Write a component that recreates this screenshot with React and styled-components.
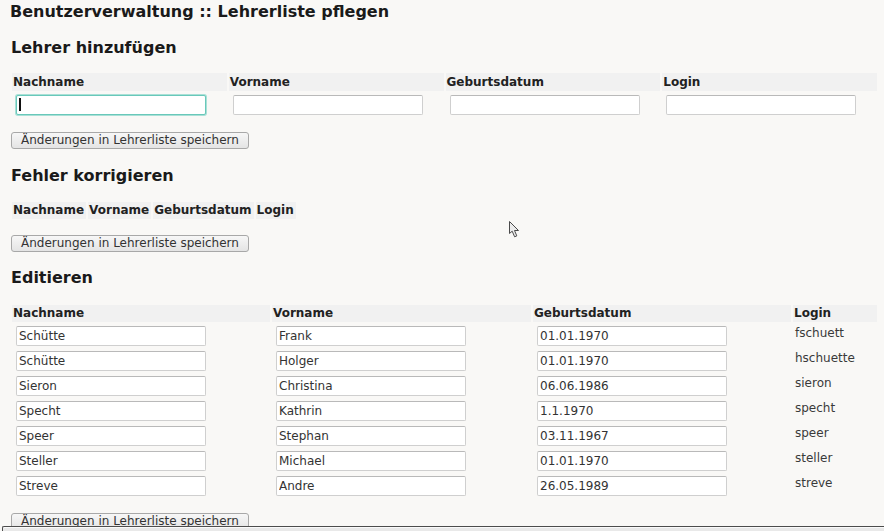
import React from 'react';
import styled, { createGlobalStyle } from 'styled-components';

const GlobalStyle = createGlobalStyle`
    html, body {
        margin: 0;
        padding: 0;
        background: #f9f8f6;
    }
    body {
        font-family: 'DejaVu Sans', Verdana, sans-serif;
        font-size: 12px;
        color: #1c1c1c;
    }
`;

const Page = styled.div`
    position: relative;
    padding: 2px 5px 0 10px;
`;

const Title = styled.h1`
    margin: 0;
    font-size: 16px;
    line-height: 19px;
    font-weight: bold;
    color: #1a1a1a;
`;

const Heading = styled.h2`
    margin: ${(p) => p.$top || 17}px 0 0 1px;
    font-size: 16px;
    line-height: 19px;
    font-weight: bold;
    color: #1a1a1a;
`;

const Table = styled.table`
    margin-top: ${(p) => p.$top}px;
    width: ${(p) => (p.$full ? '100%' : 'auto')};
    table-layout: ${(p) => (p.$full ? 'fixed' : 'auto')};
    border-collapse: separate;
    border-spacing: 2px;
`;

const Th = styled.th`
    box-sizing: border-box;
    background: #f1f1f1;
    text-align: left;
    font-weight: bold;
    font-size: 12px;
    line-height: 15px;
    padding: ${(p) => (p.$tall ? '2px' : '1px')} 2px 1px 1px;
    color: #222;
    width: ${(p) => (p.$w ? `${p.$w}px` : 'auto')};
`;

const Td = styled.td`
    padding: 2px 4px 1px;
    vertical-align: top;
    line-height: 14px;
    color: #3a3a3a;
`;

const LoginCell = styled(Td)`
    padding: 2px;
`;

const Field = styled.span`
    position: relative;
    display: block;
    width: 190px;

    &::after {
        content: '';
        display: ${(p) => (p.$focused ? 'block' : 'none')};
        position: absolute;
        left: 3px;
        top: 3px;
        width: 2px;
        height: 13px;
        background: #111;
    }
`;

const Input = styled.input`
    display: block;
    box-sizing: border-box;
    width: 190px;
    height: 20px;
    margin: 0;
    padding: 0 2px;
    font-family: 'DejaVu Sans', Verdana, sans-serif;
    font-size: 12px;
    color: #333;
    background: #fff;
    border: 1px solid ${(p) => (p.$focused ? '#69c8ba' : '#cfcfcf')};
    border-top-color: ${(p) => (p.$focused ? '#69c8ba' : '#b9b9b9')};
    border-radius: 2px;
    box-shadow: ${(p) => (p.$focused ? '0 0 0 1px #a9e0d6' : 'none')};
    outline: none;
`;

const SaveButton = styled.button`
    display: block;
    margin-top: ${(p) => p.$top}px;
    margin-left: 1px;
    height: 17px;
    padding: 0 9px;
    font-family: 'DejaVu Sans', Verdana, sans-serif;
    font-size: 12px;
    line-height: 13px;
    color: #333;
    background: linear-gradient(#f7f7f7, #e4e4e4);
    border: 1px solid #a8a8a8;
    border-radius: 3px;
`;

const Cursor = styled.svg`
    position: absolute;
    left: 508px;
    top: 220px;
`;

const BottomBar = styled.div`
    position: fixed;
    left: 2px;
    right: 0;
    bottom: 0;
    height: 4px;
    background: #e9e9e9;
    border-top: 1px solid #4c4c4c;
    border-left: 1px solid #4c4c4c;
    border-top-left-radius: 2px;
    box-shadow: inset 0 1px 0 #fafafa;
`;

const columns = ['Nachname', 'Vorname', 'Geburtsdatum', 'Login'];

const teachers = [
    ['Schütte', 'Frank', '01.01.1970', 'fschuett'],
    ['Schütte', 'Holger', '01.01.1970', 'hschuette'],
    ['Sieron', 'Christina', '06.06.1986', 'sieron'],
    ['Specht', 'Kathrin', '1.1.1970', 'specht'],
    ['Speer', 'Stephan', '03.11.1967', 'speer'],
    ['Steller', 'Michael', '01.01.1970', 'steller'],
    ['Streve', 'Andre', '26.05.1989', 'streve'],
];

const TextField = ({ value, focused }) => (
    <Field $focused={focused}>
        <Input $focused={focused} defaultValue={value} />
    </Field>
);

const App = () => {
    return (
        <Page>
            <GlobalStyle />
            <Title>Benutzerverwaltung :: Lehrerliste pflegen</Title>

            <Heading>Lehrer hinzufügen</Heading>
            <Table $full $top={14}>
                <thead>
                    <tr>
                        {columns.map((c) => (
                            <Th key={c} $tall>
                                {c}
                            </Th>
                        ))}
                    </tr>
                </thead>
                <tbody>
                    <tr>
                        {columns.map((c, i) => (
                            <Td key={c}>
                                <TextField value='' focused={i === 0} />
                            </Td>
                        ))}
                    </tr>
                </tbody>
            </Table>
            <SaveButton $top={14}>Änderungen in Lehrerliste speichern</SaveButton>

            <Heading>Fehler korrigieren</Heading>
            <Table $top={15}>
                <thead>
                    <tr>
                        {columns.map((c) => (
                            <Th key={c}>{c}</Th>
                        ))}
                    </tr>
                </thead>
            </Table>
            <SaveButton $top={14}>Änderungen in Lehrerliste speichern</SaveButton>

            <Heading $top={16}>Editieren</Heading>
            <Table $full $top={16}>
                <thead>
                    <tr>
                        <Th $w={258}>Nachname</Th>
                        <Th $w={259}>Vorname</Th>
                        <Th $w={258}>Geburtsdatum</Th>
                        <Th>Login</Th>
                    </tr>
                </thead>
                <tbody>
                    {teachers.map((t) => (
                        <tr key={t[3]}>
                            <Td>
                                <TextField value={t[0]} />
                            </Td>
                            <Td>
                                <TextField value={t[1]} />
                            </Td>
                            <Td>
                                <TextField value={t[2]} />
                            </Td>
                            <LoginCell>{t[3]}</LoginCell>
                        </tr>
                    ))}
                </tbody>
            </Table>
            <SaveButton $top={14}>Änderungen in Lehrerliste speichern</SaveButton>

            <Cursor width='13' height='19' viewBox='0 0 13 19'>
                <path
                    d='M1.5 1.5 L1.5 13.5 L4.2 11.2 L6.6 16.8 L8.8 15.9 L6.5 10.5 L10.5 10.5 Z'
                    fill='#ececec'
                    stroke='#4a4a4a'
                    strokeWidth='1'
                    strokeLinejoin='round'
                />
            </Cursor>
            <BottomBar />
        </Page>
    );
};

export default App;
